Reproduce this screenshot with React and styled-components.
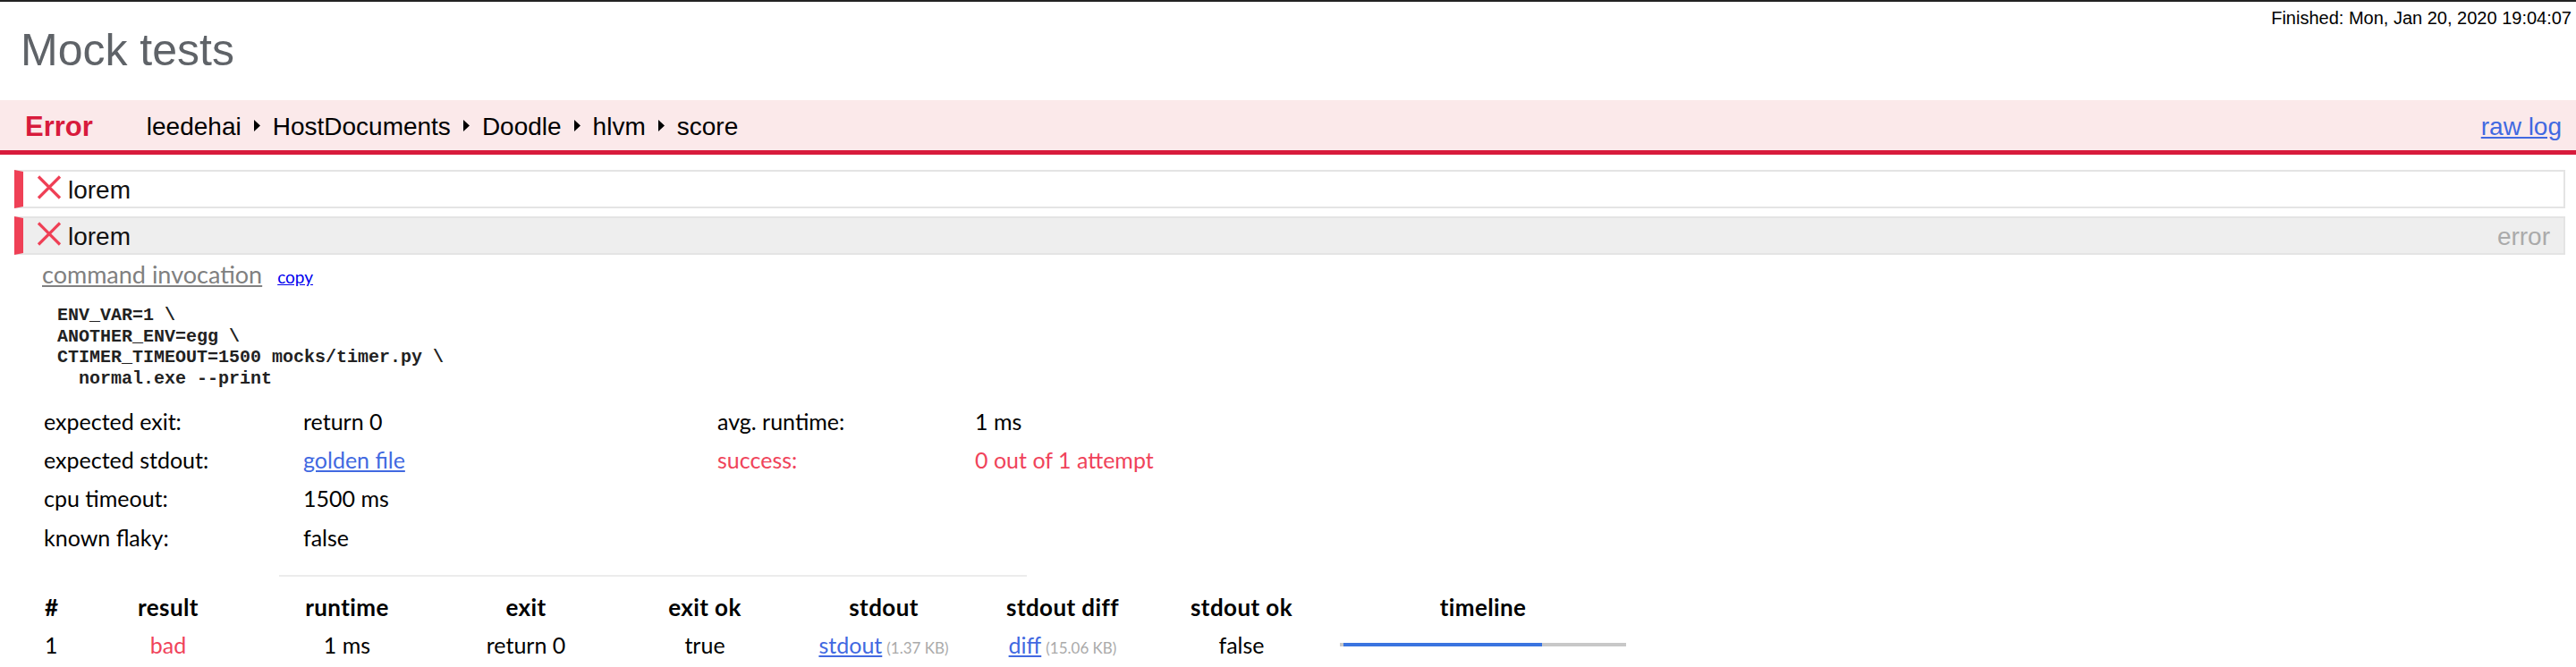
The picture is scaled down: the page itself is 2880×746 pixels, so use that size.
import React from "react";
import styled, { createGlobalStyle } from "styled-components";

const GlobalStyle = createGlobalStyle`
  * { box-sizing: border-box; }
  html, body { margin: 0; padding: 0; background: #ffffff; }
  body {
    border-top: 2px solid #222222;
    font-family: "Liberation Sans", Arial, sans-serif;
    color: #000000;
  }
`;

const sans = `"Lato", "Open Sans", sans-serif`;

const Header = styled.header`
  display: flex;
  flex-direction: column;
`;

const Finished = styled.div`
  align-self: flex-end;
  padding: 6px 5px 0 0;
  font-size: 20px;
  line-height: 24px;
  color: #000;
`;

const Title = styled.h1`
  margin: 0 0 32px 23px;
  font-size: 50px;
  line-height: 48px;
  font-weight: 400;
  color: #5f6368;
`;

const Band = styled.div`
  display: flex;
  align-items: center;
  height: 61px;
  padding: 4px 16px 0 28px;
  background: #fbe9ea;
  border-bottom: 5px solid #d81b3c;
`;

const Status = styled.span`
  font-size: 31px;
  font-weight: 700;
  color: #d81b3c;
  margin-right: 60px;
`;

const Crumbs = styled.nav`
  display: flex;
  align-items: center;
  gap: 14px;
  flex: 1;
  font-size: 28px;
`;

const Crumb = styled.span`
  color: #000;
`;

const Sep = styled.svg`
  width: 7px;
  height: 13px;
  margin-top: -4px;
`;

const Link = styled.a`
  color: ${(p) => p.$tone || "#4169e1"};
  text-decoration: underline;
  cursor: pointer;
`;

const RawLog = styled(Link)`
  font-size: 28px;
`;

const Cases = styled.div`
  display: flex;
  flex-direction: column;
  gap: 9px;
  margin: 17px 12px 0 16px;
`;

const Case = styled.div`
  display: flex;
  align-items: center;
  height: 43px;
  padding: 2px 15px 0 15px;
  border: 2px solid #e4e4e4;
  border-left: 10px solid #ef4056;
  background: ${(p) => (p.$open ? "#eeeeee" : "#ffffff")};
  font-size: 28px;
`;

const CrossIcon = styled.svg`
  width: 28px;
  height: 27px;
  margin: -6px 7px 0 0;
  flex: none;
`;

const CaseName = styled.span`
  flex: 1;
  color: #111;
`;

const CaseState = styled.span`
  color: #aaaaaa;
`;

const Detail = styled.section`
  padding-left: 47px;
  font-family: ${sans};
`;

const CmdHead = styled.div`
  display: flex;
  align-items: baseline;
  gap: 17px;
  margin-top: 6px;
  line-height: 32px;
`;

const CmdTitle = styled.span`
  font-size: 27px;
  color: #808080;
  text-decoration: underline;
`;

const Copy = styled(Link)`
  font-size: 19px;
`;

const Code = styled.pre`
  margin: 15px 0 0 17px;
  font-family: "Liberation Mono", "Courier New", monospace;
  font-weight: 700;
  font-size: 20px;
  line-height: 23.5px;
  color: #222;
`;

const Facts = styled.dl`
  display: grid;
  grid-template-columns: 290px 463px 288px auto;
  grid-auto-rows: 43.33px;
  align-items: center;
  margin: 14px 0 0 2px;
  font-size: 25px;
`;

const FactLabel = styled.dt`
  margin: 0;
  color: ${(p) => (p.$bad ? "#f0435a" : "#000")};
`;

const FactValue = styled.dd`
  margin: 0;
  color: ${(p) => (p.$bad ? "#f0435a" : "#000")};
`;

const Divider = styled.hr`
  width: 836px;
  margin: 21px 0 0 265px;
  border: none;
  border-top: 2px solid #ececec;
`;

const Attempts = styled.div`
  display: grid;
  grid-template-columns: 38px repeat(7, 200px) 340px;
  grid-auto-rows: 42px;
  align-items: center;
  margin: 13px 0 0 3px;
  font-size: 25px;
`;

const Th = styled.div`
  font-weight: 700;
  font-size: 26px;
  letter-spacing: 0.4px;
  text-align: ${(p) => (p.$left ? "left" : "center")};
`;

const Td = styled.div`
  text-align: ${(p) => (p.$left ? "left" : "center")};
  color: ${(p) => (p.$bad ? "#f0435a" : "#000")};
  padding: ${(p) => (p.$pad ? "0 10px" : "0")};
`;

const Size = styled.span`
  font-size: 17px;
  color: #aaaaaa;
  margin-left: 5px;
`;

const Track = styled.div`
  position: relative;
  height: 4px;
  background: #c8c8c8;
`;

const Fill = styled.div`
  position: absolute;
  top: 0;
  bottom: 0;
  background: #3a74e0;
`;

const Cross = () => (
  <CrossIcon viewBox="0 0 28 27">
    <path d="M2 1.5 L26 25.5 M26 1.5 L2 25.5" stroke="#ef4056" strokeWidth="3.2" fill="none" />
  </CrossIcon>
);

const Arrow = () => (
  <Sep viewBox="0 0 7 13">
    <polygon points="0,0 7,6.5 0,13" fill="#000" />
  </Sep>
);

const path = ["leedehai", "HostDocuments", "Doodle", "hlvm", "score"];

export default function App() {
  const timeline = { start: 4 / 320, end: 226 / 320 };
  return (
    <>
      <GlobalStyle />
      <Header>
        <Finished>Finished: Mon, Jan 20, 2020 19:04:07</Finished>
        <Title>Mock tests</Title>
      </Header>
      <Band>
        <Status>Error</Status>
        <Crumbs>
          {path.map((p, i) => (
            <React.Fragment key={p}>
              {i > 0 && <Arrow />}
              <Crumb>{p}</Crumb>
            </React.Fragment>
          ))}
        </Crumbs>
        <RawLog>raw log</RawLog>
      </Band>
      <Cases>
        <Case>
          <Cross />
          <CaseName>lorem</CaseName>
        </Case>
        <Case $open>
          <Cross />
          <CaseName>lorem</CaseName>
          <CaseState>error</CaseState>
        </Case>
      </Cases>
      <Detail>
        <CmdHead>
          <CmdTitle>command invocation</CmdTitle>
          <Copy $tone="#0000ee">copy</Copy>
        </CmdHead>
        <Code>{`ENV_VAR=1 \\
ANOTHER_ENV=egg \\
CTIMER_TIMEOUT=1500 mocks/timer.py \\
  normal.exe --print`}</Code>
        <Facts>
          <FactLabel>expected exit:</FactLabel>
          <FactValue>return 0</FactValue>
          <FactLabel>avg. runtime:</FactLabel>
          <FactValue>1 ms</FactValue>
          <FactLabel>expected stdout:</FactLabel>
          <FactValue><Link>golden file</Link></FactValue>
          <FactLabel $bad>success:</FactLabel>
          <FactValue $bad>0 out of 1 attempt</FactValue>
          <FactLabel>cpu timeout:</FactLabel>
          <FactValue>1500 ms</FactValue>
          <FactLabel />
          <FactValue />
          <FactLabel>known flaky:</FactLabel>
          <FactValue>false</FactValue>
        </Facts>
        <Divider />
        <Attempts>
          <Th $left>#</Th>
          <Th>result</Th>
          <Th>runtime</Th>
          <Th>exit</Th>
          <Th>exit ok</Th>
          <Th>stdout</Th>
          <Th>stdout diff</Th>
          <Th>stdout ok</Th>
          <Th>timeline</Th>
          <Td $left>1</Td>
          <Td $bad>bad</Td>
          <Td>1 ms</Td>
          <Td>return 0</Td>
          <Td>true</Td>
          <Td><Link>stdout</Link><Size>(1.37 KB)</Size></Td>
          <Td><Link>diff</Link><Size>(15.06 KB)</Size></Td>
          <Td>false</Td>
          <Td $pad>
            <Track>
              <Fill
                style={{
                  left: `${timeline.start * 100}%`,
                  width: `${(timeline.end - timeline.start) * 100}%`,
                }}
              />
            </Track>
          </Td>
        </Attempts>
      </Detail>
    </>
  );
}
